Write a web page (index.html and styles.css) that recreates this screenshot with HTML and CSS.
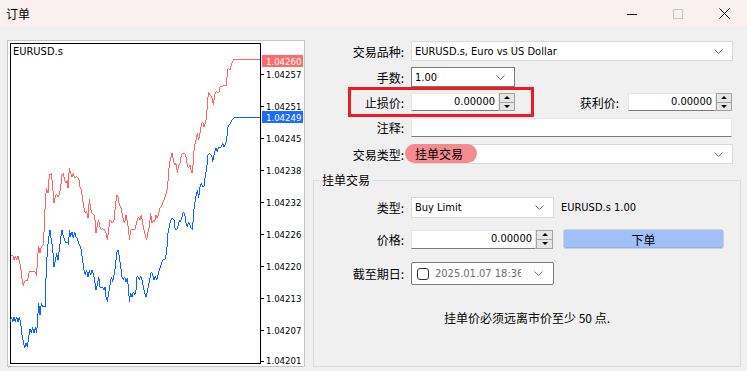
FILE: index.html
```html
<!DOCTYPE html>
<html lang="zh-CN">
<head>
    <meta charset="UTF-8">
    <meta name="viewport" content="width=device-width, initial-scale=1.0">
    <title>订单</title>
    <link rel="stylesheet" href="styles.css">
</head>
<body>
    <div class="titlebar">
        <span class="title">订单</span>
        <div class="winbtns">
            <span class="wb"><svg width="10" height="10" viewBox="0 0 10 10"><line x1="0" y1="5.5" x2="10" y2="5.5" stroke="#000"/></svg></span>
            <span class="wb"><svg width="10" height="10" viewBox="0 0 10 10"><rect x="0.5" y="0.5" width="9" height="9" fill="none" stroke="#c6c6c6"/></svg></span>
            <span class="wb"><svg width="11" height="11" viewBox="0 0 11 11"><path d="M0.5 0.5 L10.5 10.5 M10.5 0.5 L0.5 10.5" stroke="#000" fill="none"/></svg></span>
        </div>
    </div>

    <div class="main">
        <div class="chart-panel">
            <svg class="chart" width="296" height="325" viewBox="8 41 296 325">
                <rect x="10.5" y="43.5" width="250" height="320" fill="none" stroke="#000"/>
                <text x="13" y="55" class="sym">EURUSD.s</text>
                <g stroke="#000">
                    <line x1="261" y1="74.5" x2="264" y2="74.5"/>
                    <line x1="261" y1="106.5" x2="264" y2="106.5"/>
                    <line x1="261" y1="138.5" x2="264" y2="138.5"/>
                    <line x1="261" y1="170.5" x2="264" y2="170.5"/>
                    <line x1="261" y1="202.5" x2="264" y2="202.5"/>
                    <line x1="261" y1="234.5" x2="264" y2="234.5"/>
                    <line x1="261" y1="266.5" x2="264" y2="266.5"/>
                    <line x1="261" y1="298.5" x2="264" y2="298.5"/>
                    <line x1="261" y1="330.5" x2="264" y2="330.5"/>
                    <line x1="261" y1="361.5" x2="264" y2="361.5"/>
                </g>
                <g class="axis">
                    <text x="266" y="78">1.04257</text>
                    <text x="266" y="110">1.04251</text>
                    <text x="266" y="142">1.04245</text>
                    <text x="266" y="174">1.04238</text>
                    <text x="266" y="206">1.04232</text>
                    <text x="266" y="238">1.04226</text>
                    <text x="266" y="270">1.04220</text>
                    <text x="266" y="302">1.04213</text>
                    <text x="266" y="334">1.04207</text>
                    <text x="266" y="364">1.04201</text>
                </g>
                <g transform="translate(8,40) scale(0.3333)" fill="none" stroke-width="3" shape-rendering="crispEdges">
                    <polyline stroke="#ff6464" points="8,650 14,645 18,660 22,648 26,660 30,648 34,665 38,680 42,718 46,738 50,722 58,722 64,695 82,695 86,708 88,660 92,618 96,640 100,620 106,615 110,540 112,475 116,445 120,460 124,405 130,400 134,440 138,490 142,470 146,462 150,470 154,465 158,440 162,405 166,400 170,420 174,430 178,420 180,445 184,385 188,400 192,410 196,400 200,415 206,410 212,415 216,440 220,450 224,480 228,505 232,520 236,512 240,535 244,478 248,505 252,520 258,525 262,545 264,580 268,555 272,540 276,560 280,570 284,565 290,570 294,580 298,600 302,570 306,540 310,545 314,550 318,540 322,500 326,465 330,470 334,495 338,500 342,520 346,540 350,550 354,525 358,545 362,570 364,600 368,570 380,570 384,555 388,540 392,530 396,540 400,525 404,550 408,570 412,585 416,600 420,575 424,560 428,520 432,550 436,540 440,545 444,525 448,535 452,520 456,505 460,500 464,490 468,480 472,470 476,455 478,445 482,400 484,370 488,355 492,340 496,360 500,375 504,370 508,398 512,375 516,370 520,345 524,340 530,340 534,350 538,375 542,385 546,375 550,395 554,400 556,355 560,315 564,300 568,280 572,300 576,280 580,255 584,245 588,260 592,250 596,230 598,190 602,155 606,165 610,170 614,180 616,195 620,165 624,155 628,155 632,160 636,140 640,140 656,135 658,90 662,85 666,90 670,75 676,60 756,60"/>
                    <polyline stroke="#0a64ff" points="8,845 10,832 14,845 18,832 22,845 26,832 30,845 34,832 38,850 42,885 46,905 50,925 54,910 58,920 62,890 66,868 70,880 74,862 78,880 82,862 86,880 88,850 92,790 96,825 100,790 104,800 112,800 114,715 118,630 122,595 126,570 130,600 134,625 138,680 142,660 146,640 150,660 154,630 158,595 162,570 166,590 170,600 174,610 178,605 182,615 184,570 188,590 192,575 196,595 200,575 204,590 208,595 212,610 218,620 224,660 228,690 232,705 236,690 240,710 244,690 248,705 252,690 256,700 260,720 264,750 268,735 272,710 276,740 280,745 284,740 288,750 292,740 294,770 298,785 302,760 306,735 310,710 314,725 318,705 322,680 326,640 330,630 334,650 338,680 342,710 346,720 350,710 354,725 358,715 362,750 364,785 368,760 372,770 376,755 380,765 384,750 386,710 390,710 394,720 398,708 402,720 406,740 410,760 414,770 418,755 422,735 426,715 430,695 434,705 438,720 442,708 446,720 450,705 454,690 458,680 462,665 466,660 470,660 474,645 478,615 480,580 484,560 488,540 492,535 498,540 502,570 506,570 510,560 514,540 518,545 522,530 526,515 530,520 534,550 538,560 542,545 546,555 550,565 554,570 556,525 560,490 564,470 568,450 572,475 576,440 580,430 584,440 588,440 592,405 596,385 600,345 604,340 608,345 612,350 614,365 620,335 624,325 628,335 632,320 636,325 640,320 644,310 648,320 652,315 656,300 660,260 664,255 668,250 672,240 676,238 680,232 756,232"/>
                </g>
                <rect x="262" y="55" width="41" height="12" fill="#ff6b6b"/>
                <text x="266" y="64.5" class="tag">1.04260</text>
                <rect x="262" y="111" width="41" height="12" fill="#1a6cff"/>
                <text x="266" y="120.5" class="tag">1.04249</text>
            </svg>
        </div>

        <div class="form">
            <div class="row">
                <span class="lbl">交易品种:</span>
                <div class="combo w-full">
                    <span>EURUSD.s, Euro vs US Dollar</span>
                    <svg class="chev" width="9" height="5" viewBox="0 0 9 5"><polyline points="0.5,0.5 4.5,4.5 8.5,0.5" fill="none" stroke="#6b6b6b"/></svg>
                </div>
            </div>
            <div class="row">
                <span class="lbl">手数:</span>
                <div class="combo dark w-lots">
                    <span>1.00</span>
                    <svg class="chev" width="9" height="5" viewBox="0 0 9 5"><polyline points="0.5,0.5 4.5,4.5 8.5,0.5" fill="none" stroke="#6b6b6b"/></svg>
                </div>
            </div>
            <div class="row row-sl">
                <span class="mark"></span>
                <span class="lbl">止损价:</span>
                <div class="num w-sl">0.00000</div>
                <div class="spin"><i class="up"></i><i class="down"></i></div>
                <span class="lbl lbl-tp">获利价:</span>
                <div class="num w-tp">0.00000</div>
                <div class="spin"><i class="up"></i><i class="down"></i></div>
            </div>
            <div class="row row-note">
                <span class="lbl">注释:</span>
                <div class="num w-note"></div>
            </div>
            <div class="row row-kind">
                <span class="lbl">交易类型:</span>
                <div class="combo w-full">
                    <span class="pill">挂单交易</span>
                    <svg class="chev" width="9" height="5" viewBox="0 0 9 5"><polyline points="0.5,0.5 4.5,4.5 8.5,0.5" fill="none" stroke="#6b6b6b"/></svg>
                </div>
            </div>

            <fieldset class="group">
                <legend>挂单交易</legend>
                <div class="row row-type">
                    <span class="lbl">类型:</span>
                    <div class="combo w-mid">
                        <span>Buy Limit</span>
                        <svg class="chev" width="9" height="5" viewBox="0 0 9 5"><polyline points="0.5,0.5 4.5,4.5 8.5,0.5" fill="none" stroke="#6b6b6b"/></svg>
                    </div>
                    <span class="info">EURUSD.s 1.00</span>
                </div>
                <div class="row row-price">
                    <span class="lbl">价格:</span>
                    <div class="num w-price">0.00000</div>
                    <div class="spin tall"><i class="up"></i><i class="down"></i></div>
                    <div class="btn">下单</div>
                </div>
                <div class="row row-exp">
                    <span class="lbl">截至期日:</span>
                    <div class="date w-mid">
                        <span class="check"></span>
                        <span class="stamp">2025.01.07 18:36</span>
                        <svg class="chev" width="9" height="5" viewBox="0 0 9 5"><polyline points="0.5,0.5 4.5,4.5 8.5,0.5" fill="none" stroke="#6b6b6b"/></svg>
                    </div>
                </div>
                <p class="msg">挂单价必须远离市价至少 50 点.</p>
            </fieldset>
        </div>
    </div>
</body>
</html>
```

FILE: styles.css
```css
* {
    box-sizing: border-box;
}
body {
    margin: 0;
    width: 747px;
    height: 371px;
    overflow: hidden;
    background: #f0f0f0;
    color: #000;
    font-family: "DejaVu Sans Condensed", "Liberation Sans", "Noto Sans CJK SC", sans-serif;
    font-size: 11px;
}

/* window title */
.titlebar {
    height: 27px;
    background: #f9f0ef;
    display: flex;
    align-items: center;
    justify-content: space-between;
}
.title {
    padding-left: 6px;
    font: 12px "Noto Sans CJK SC", sans-serif;
}
.winbtns {
    display: flex;
    height: 100%;
}
.wb {
    width: 46px;
    display: flex;
    align-items: center;
    justify-content: center;
}
.wb svg {
    display: block;
}

.main {
    display: flex;
    align-items: flex-start;
    padding-top: 13px;
}

/* chart */
.chart-panel {
    margin-left: 7px;
    width: 298px;
    height: 327px;
    border: 1px solid #c6c6c6;
    background: #fff;
}
.chart {
    display: block;
}
.chart text {
    font-family: "DejaVu Sans Condensed", "Liberation Sans", sans-serif;
}
.chart .sym {
    font-size: 11px;
}
.chart .axis text,
.chart .tag {
    font-size: 9.5px;
}
.chart .tag {
    fill: #fff;
}

/* order form */
.form {
    margin-left: 8px;
    width: 428px;
    padding-top: 1px;
}
.row {
    position: relative;
    display: flex;
    align-items: center;
    height: 20px;
    margin-top: 6px;
}
.row:first-child {
    margin-top: 0;
}
.lbl {
    width: 91px;
    margin-right: 7px;
    text-align: right;
    white-space: nowrap;
    font: 12px "Noto Sans CJK SC", sans-serif;
}
.combo,
.date {
    position: relative;
    height: 20px;
    background: #fff;
    border: 1px solid #d9d9d9;
    display: flex;
    align-items: center;
    justify-content: space-between;
    padding: 0 9px 0 3px;
    white-space: nowrap;
}
.combo.dark,
.date {
    border-color: #7a7a7a;
}
.chev {
    display: block;
    flex-shrink: 0;
}
.w-full { width: 322px; }
.w-lots { width: 104px; }
.w-mid { width: 143px; }

.num {
    height: 18px;
    background: #fff;
    border: 1px solid #e6e6e6;
    border-bottom-color: #7a7a7a;
    text-align: right;
    padding-right: 3px;
    line-height: 16px;
}
.w-sl { width: 88px; }
.w-tp { width: 88px; }
.w-note { width: 321px; height: 19px; }
.w-price { width: 125px; height: 19px; }

.spin {
    width: 16px;
    height: 18px;
    border: 1px solid #a3a3a3;
    background: #e6e6e6;
    display: flex;
    flex-direction: column;
}
.spin.tall {
    width: 17px;
    height: 19px;
}
.spin i {
    flex: 1;
    display: flex;
    align-items: center;
    justify-content: center;
}
.spin i + i {
    border-top: 1px solid #a3a3a3;
}
.spin .up::before,
.spin .down::before {
    content: "";
    border-left: 3px solid transparent;
    border-right: 3px solid transparent;
}
.spin .up::before {
    border-bottom: 3px solid #000;
}
.spin .down::before {
    border-top: 3px solid #000;
}

.row-sl {
    height: 18px;
    padding-right: 9px;
}
.lbl-tp {
    width: auto;
    flex: 1;
    margin-right: 9px;
}
.mark {
    position: absolute;
    left: 35px;
    top: -6px;
    width: 186px;
    height: 30px;
    border: 3px solid #ed1c24;
}
.row-note {
    height: 19px;
    margin-top: 7px;
}
.row-kind {
    margin-top: 7px;
}
.pill {
    position: absolute;
    left: -7px;
    top: -1px;
    width: 72px;
    height: 19px;
    border-radius: 10px;
    background: #f38c90;
    padding-left: 10px;
    font: 12px/19px "Noto Sans CJK SC", sans-serif;
}
.row-kind .combo {
    justify-content: flex-end;
}

/* pending order group */
.group {
    margin: 8px 0 0;
    padding: 0;
    width: 428px;
    height: 195px;
    border: 1px solid #dcdcdc;
    min-width: 0;
}
.group legend {
    margin-left: 5px;
    padding: 0 3px;
    font: 12px/16px "Noto Sans CJK SC", sans-serif;
}
.group .lbl {
    width: 90px;
}
.row-type {
    height: 21px;
    margin-top: 9px;
}
.row-type .combo {
    height: 21px;
}
.info {
    margin-left: 7px;
}
.row-price {
    margin-top: 11px;
}
.btn {
    width: 161px;
    height: 20px;
    margin-left: 10px;
    background: #a2c0f8;
    border: 1px solid #d0d0d0;
    border-radius: 3px;
    box-shadow: inset 0 -1px 0 #8fb0f0;
    display: flex;
    align-items: center;
    justify-content: center;
    font: 12px "Noto Sans CJK SC", sans-serif;
}
.row-exp {
    height: 23px;
    margin-top: 13px;
}
.date {
    height: 23px;
    justify-content: flex-start;
    padding-left: 5px;
    border-radius: 2px;
}
.check {
    width: 12px;
    height: 12px;
    border: 1px solid #333;
    border-radius: 3px;
    background: #fff;
    flex-shrink: 0;
}
.stamp {
    width: 86px;
    margin-left: 6px;
    overflow: hidden;
    color: #6d6d6d;
}
.date .chev {
    margin-left: 13px;
}
.msg {
    margin: 24px 0 0;
    text-align: center;
    font: 12px/17px "Noto Sans CJK SC", sans-serif;
}
```
